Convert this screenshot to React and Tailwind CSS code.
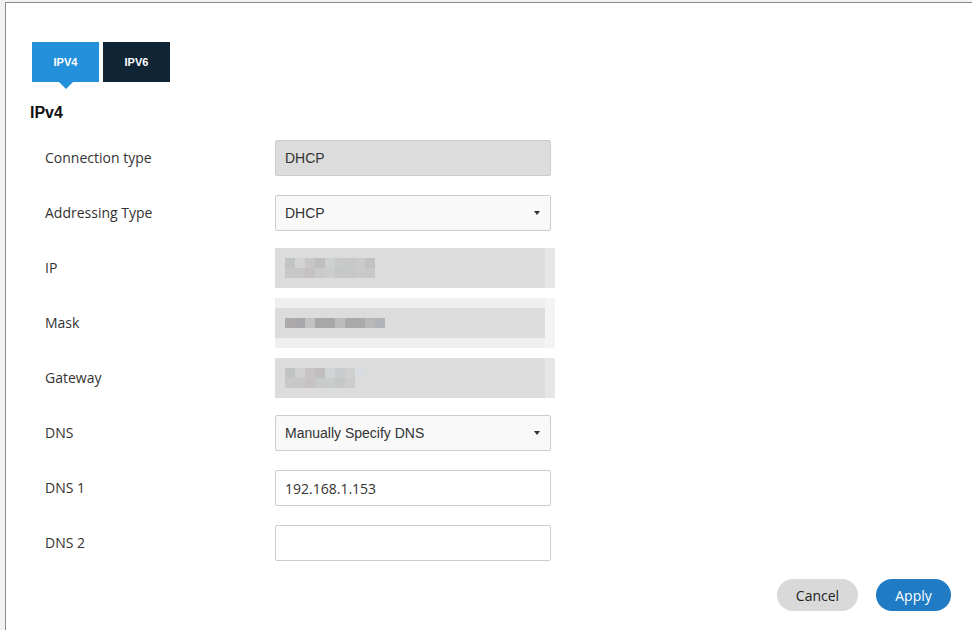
import React from 'react';

// pixelated (blurred) values shown in the read-only fields
const ipBlocks = [
  ['#c0c4c4', '#d4d4d4', '#c8c6c6', '#c0bfbf', '#cdd0d0', '#c8caca', '#c6c8c8', '#ccc9c9', '#c2c2c4'],
  ['#c8c8c8', '#c8c6c8', '#c6c2c2', '#c8caca', '#cccece', '#c6c8c8', '#c6c8c8', '#c8caca', '#c8c8c8'],
];
const maskBlocks = [
  ['#aeaaaa', '#a8a8ac', '#c2c2c2', '#a8a8a8', '#a8a8a8', '#bcbcbc', '#aaaaaa', '#aaaaaa', '#b8b8b8', '#b0b4b8'],
];
const gatewayBlocks = [
  ['#c0c4c4', '#d0d0d0', '#c8c4c4', '#c0bebe', '#d0d4d4', '#c8cccc', '#d0d0d0', '#d8dce0'],
  ['#c8c8c8', '#c8c6c8', '#c6c2c2', '#c8caca', '#c8cccc', '#c6c8c8', '#cccccc', '#dcdcdc'],
];

const Pixels = ({ rows }) => (
  <div className="flex flex-col">
    {rows.map((row, i) => (
      <div key={i} className="flex">
        {row.map((c, j) => (
          <div key={j} className="w-[10px] h-[10px]" style={{ backgroundColor: c }} />
        ))}
      </div>
    ))}
  </div>
);

const Caret = () => (
  <svg width="6" height="4" viewBox="0 0 6 4" className="absolute right-[10px] top-1/2 -translate-y-1/2">
    <path d="M0 0h6L3 4z" fill="#333" />
  </svg>
);

const Row = ({ label, children }) => (
  <div className="flex items-center h-[55px]">
    <div className="w-[245px] pl-[15px] pt-[1px] text-[14px] leading-[20px] text-[#333]" style={{ fontFamily: '"Open Sans", sans-serif' }}>
      {label}
    </div>
    {children}
  </div>
);

const inputBase =
  'w-[276px] h-[36px] rounded-[2px] border border-[#cccccc] flex items-center px-[9px] pt-[1px] text-[14px] text-[#333] relative';

export default function App() {
  return (
    <div className="w-[972px] h-[630px] bg-[#f2f2f2] pl-[5px] pt-[2px] overflow-hidden">
      <div className="h-full bg-white border-l border-t border-[#8a8a8a] pl-[26px] pt-[39px]" style={{ fontFamily: '"Liberation Sans", Arial, sans-serif' }}>
        {/* tabs */}
        <div className="flex gap-[4px]">
          <div className="relative w-[67px] h-[40px] bg-[#2490db] text-white text-[11px] font-bold flex items-center justify-center">
            IPV4
            <div className="absolute left-1/2 -translate-x-1/2 top-full w-0 h-0 border-l-[7px] border-r-[7px] border-t-[7px] border-l-transparent border-r-transparent border-t-[#2490db]" />
          </div>
          <div className="w-[67px] h-[40px] bg-[#0f2535] text-white text-[11px] font-bold flex items-center justify-center">
            IPV6
          </div>
        </div>

        <div className="mt-[21px] -ml-[2px] text-[16px] font-bold text-[#111] leading-[20px]">IPv4</div>

        <div className="mt-[7px] -ml-[2px] flex flex-col">
          <Row label="Connection type">
            <div className={inputBase + ' bg-[#dcdcdc]'}>DHCP</div>
          </Row>
          <Row label="Addressing Type">
            <div className={inputBase + ' bg-[#f9f9f9]'}>
              DHCP
              <Caret />
            </div>
          </Row>
          <Row label="IP">
            <div className="w-[280px] h-[40px] bg-[#dcdcdc] flex items-center pl-[10px] border-r-[10px] border-[#e6e6e6]">
              <Pixels rows={ipBlocks} />
            </div>
          </Row>
          <Row label="Mask">
            <div className="w-[280px] h-[50px] bg-[#efefef] flex items-center border-r-[10px] border-[#f4f4f4]">
              <div className="flex-1 h-[30px] bg-[#dcdcdc] flex items-center pl-[10px]">
                <Pixels rows={maskBlocks} />
              </div>
            </div>
          </Row>
          <Row label="Gateway">
            <div className="w-[280px] h-[40px] bg-[#dcdcdc] flex items-center pl-[10px] border-r-[10px] border-[#e6e6e6]">
              <Pixels rows={gatewayBlocks} />
            </div>
          </Row>
          <Row label="DNS">
            <div className={inputBase + ' bg-[#f9f9f9]'}>
              Manually Specify DNS
              <Caret />
            </div>
          </Row>
          <Row label="DNS 1">
            <div className={inputBase + ' bg-white'} style={{ fontFamily: '"Open Sans", sans-serif' }}>
              192.168.1.153
            </div>
          </Row>
          <Row label="DNS 2">
            <div className={inputBase + ' bg-white'} />
          </Row>
        </div>

        <div className="flex justify-end gap-[18px] pr-[21px] mt-[9px]" style={{ fontFamily: '"Open Sans", sans-serif' }}>
          <button className="w-[81px] h-[32px] rounded-full bg-[#d9d9d9] text-[14px] text-[#222]">Cancel</button>
          <button className="w-[75px] h-[32px] rounded-full bg-[#1e7bc4] text-[14px] text-white">Apply</button>
        </div>
      </div>
    </div>
  );
}
